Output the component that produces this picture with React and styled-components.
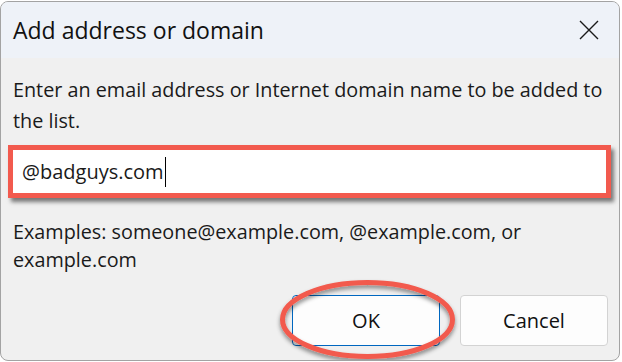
import styled, { createGlobalStyle } from "styled-components";

const GlobalStyle = createGlobalStyle`
  html, body {
    margin: 0;
    background: #ffffff;
  }
  body {
    font-family: "Open Sans", "Noto Sans", sans-serif;
    color: #1a1a1a;
  }
`;

const Window = styled.div`
  position: relative;
  box-sizing: border-box;
  width: 620px;
  height: 360px;
  margin-top: 1px;
  border: 1px solid #a3a3a3;
  border-radius: 8px;
  overflow: hidden;
  background: #f0f0f0;
  display: flex;
  flex-direction: column;
`;

const TitleBar = styled.div`
  height: 56px;
  flex-shrink: 0;
  display: flex;
  align-items: center;
  justify-content: space-between;
  padding: 0 20px 0 12px;
  background: #eef2f8;
`;

const Title = styled.div`
  font-size: 23px;
  color: #111;
`;

const Close = styled.button`
  width: 20px;
  height: 20px;
  padding: 0;
  border: none;
  background: none;
  display: flex;
`;

const Body = styled.div`
  flex: 1;
  display: flex;
  flex-direction: column;
  padding: 16px 8px 14px 12px;
`;

const Text = styled.p`
  margin: ${(p) => p.$top || 0}px 0 0;
  font-size: 19.8px;
  line-height: ${(p) => p.$line || 30}px;
`;

const Field = styled.div`
  margin: 9px 0 0 -5px;
  height: 53px;
  box-sizing: border-box;
  border: 5px solid #f25a4e;
  background: #ffffff;
  box-shadow: 3px 4px 4px rgba(0, 0, 0, 0.5);
  display: flex;
  align-items: center;
  padding-left: 9px;
  font-size: 20px;
`;

const Caret = styled.span`
  display: inline-block;
  width: 1px;
  height: 30px;
  background: #000;
  margin-left: 1px;
`;

const Buttons = styled.div`
  margin: auto 3px 0 0;
  display: flex;
  justify-content: flex-end;
  gap: 20px;
`;

const Slot = styled.div`
  position: relative;
`;

const Button = styled.button`
  width: 148px;
  height: 51px;
  box-sizing: border-box;
  border-radius: 4px;
  border: 1px solid ${(p) => (p.$primary ? "#0067c0" : "#d3d3d3")};
  background: #fdfdfd;
  font-family: inherit;
  font-size: 20px;
  color: #111;
`;

const Ring = styled.svg`
  position: absolute;
  left: -20px;
  top: -17px;
  overflow: visible;
  pointer-events: none;
`;

export default function App() {
  return (
    <>
      <GlobalStyle />
      <Window>
        <TitleBar>
          <Title>Add address or domain</Title>
          <Close aria-label="Close">
            <svg width="20" height="20" viewBox="0 0 20 20">
              <path d="M1 1L19 19M19 1L1 19" stroke="#1a1a1a" strokeWidth="1.4" />
            </svg>
          </Close>
        </TitleBar>
        <Body>
          <Text $line={31}>
            Enter an email address or Internet domain name to be added to the list.
          </Text>
          <Field>
            @badguys.com
            <Caret />
          </Field>
          <Text $top={20} $line={28}>
            Examples: someone@example.com, @example.com, or example.com
          </Text>
          <Buttons>
            <Slot>
              <Button $primary>OK</Button>
              <Ring width="190" height="84">
                <defs>
                  <filter id="sh" x="-20%" y="-30%" width="140%" height="160%">
                    <feDropShadow dx="0" dy="3" stdDeviation="2" floodColor="#000" floodOpacity="0.45" />
                  </filter>
                </defs>
                <ellipse
                  cx="95.5"
                  cy="41.5"
                  rx="85"
                  ry="37"
                  fill="none"
                  stroke="#f25a4e"
                  strokeWidth="5"
                  filter="url(#sh)"
                />
              </Ring>
            </Slot>
            <Button>Cancel</Button>
          </Buttons>
        </Body>
      </Window>
    </>
  );
}
